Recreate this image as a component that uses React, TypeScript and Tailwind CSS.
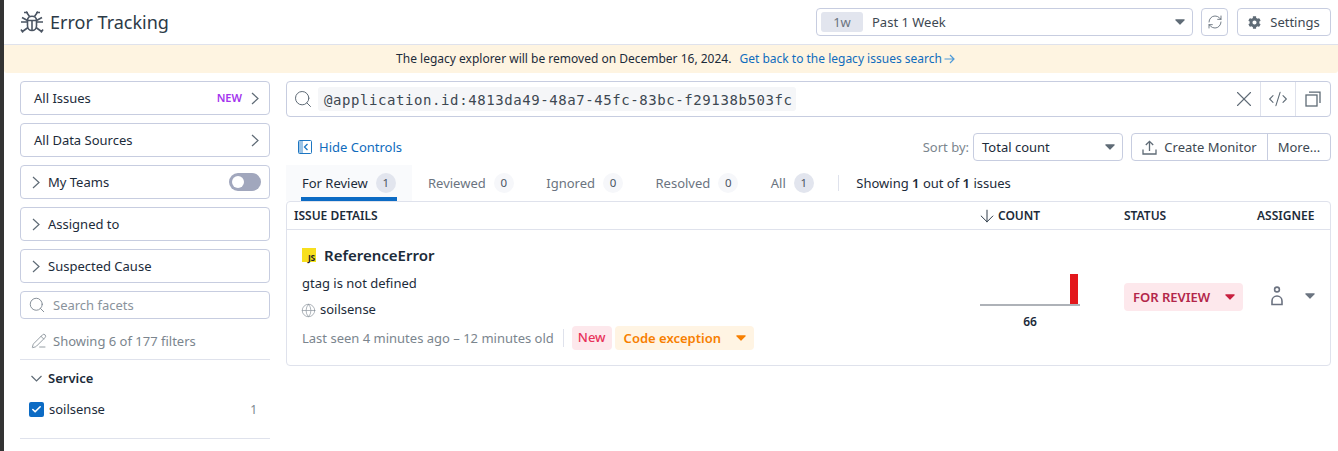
import { Search, X, CodeXml, RefreshCw, ArrowDown, Globe, PencilLine, Check } from 'lucide-react';
import { FaCog } from 'react-icons/fa';

function Caret({ className }: { className: string }) {
  return (
    <svg width="10" height="6" viewBox="0 0 10 6" className={className}>
      <path d="M0.800 0.300h8.400a.6.6 0 0 1 .45 1L5.400 5.500a.6.6 0 0 1-.8 0L.35 1.300A.6.6 0 0 1 .8.300z" fill="currentColor" />
    </svg>
  );
}

function ChevronR({ className }: { className: string }) {
  return (
    <svg width="8" height="13" viewBox="0 0 8 13" fill="none" stroke="#5f6b76" strokeWidth="1.200" className={className}>
      <path d="M1 1l6 5.500-6 5.500" />
    </svg>
  );
}

function BugIcon() {
  return (
    <svg width="24" height="24" viewBox="0 0 24 24" fill="none" stroke="#4b5563" strokeWidth="1.600" className="shrink-0">
      <path d="M7.500 10.500c0-2.500 2-4.200 4.500-4.200s4.500 1.700 4.500 4.200v5.300c0 2.600-2 4.700-4.500 4.700s-4.500-2.100-4.500-4.700z" />
      <path d="M8 10.500h8M12 10.500v10" />
      <path d="M6 1.500l3.500 5M18 1.500l-3.500 5M4 2.500l4 0M20 2.500l-4 0M1 12h6.500M23 12h-6.500M2 7.500l5.500 3M22 7.500l-5.500 3M2.500 21.500l5.500-4M21.500 21.500l-5.500-4M1 19.500l2 3M23 19.500l-2 3" />
    </svg>
  );
}

function PersonIcon() {
  return (
    <svg width="14" height="20" viewBox="0 0 14 20" fill="none" stroke="#6b7280" strokeWidth="1.600">
      <circle cx="7" cy="3.500" r="2.400" />
      <path d="M2 18.500v-3.500c0-2.800 2.200-5 5-5s5 2.200 5 5v3.500z" />
    </svg>
  );
}

function HideIcon() {
  return (
    <svg width="14" height="14" viewBox="0 0 14 14" fill="none" className="shrink-0">
      <rect x="0.500" y="0.500" width="13" height="13" rx="1" stroke="#1d76c2" />
      <rect x="1" y="1" width="4" height="12" fill="#9cc4e6" />
      <path d="M9.500 4l-3 3 3 3" stroke="#1d76c2" strokeWidth="1.300" />
    </svg>
  );
}

function CopyIcon() {
  return (
    <svg width="16" height="16" viewBox="0 0 16 16" fill="none" stroke="#5f6b76" strokeWidth="1.300">
      <rect x="1" y="4" width="11" height="11" />
      <path d="M4 1.200h11v10.800" />
    </svg>
  );
}

function TrayUpIcon() {
  return (
    <svg width="15" height="15" viewBox="0 0 15 15" fill="none" stroke="#5f6b76" strokeWidth="1.300">
      <path d="M7.500 11V1.500M3.800 5l3.700-3.700L11.200 5" />
      <path d="M1 9.500v4.500h13V9.500" />
    </svg>
  );
}

function FacetCard({ label }: { label: string }) {
  return (
    <div className="flex h-[34px] items-center rounded-[4px] border border-[#c7cde0] pl-[11px]">
      <ChevronR className="mr-[8px]" />
      <span className="pt-[2px]">{label}</span>
    </div>
  );
}

function Tab({ label, count, active, strong }: { label: string; count: string; active?: boolean; strong?: boolean }) {
  return (
    <div className={active ? 'relative flex h-[36px] w-[126px] items-center gap-[8px] bg-[#f9fafc] pl-[16px] text-[#1c2b3a]' : 'flex h-[36px] items-center gap-[8px] pl-[16px] pr-[16.500px] text-[#6b7480]'}>
      <span className="pt-[2px]">{label}</span>
      <span className={active || strong ? 'flex h-[20px] w-[20px] items-center justify-center rounded-full bg-[#e2e5ee] text-[11.500px] text-[#4b5563]' : 'flex h-[20px] w-[20px] items-center justify-center rounded-full bg-[#f6f7fa] text-[11.500px] text-[#4b5563]'}>
        {count}
      </span>
      {active && <span className="absolute bottom-0 left-[15px] right-[15px] h-[4px] bg-[#0c6bc4]" />}
    </div>
  );
}

export default function App() {
  return (
    <div className="flex h-[451px] w-[1338px] overflow-hidden bg-white font-['Noto_Sans',sans-serif] text-[13px] text-[#1c2b3a]">
      <div className="w-[4px] shrink-0 bg-[#333333]" />
      <div className="flex min-w-0 flex-1 flex-col">
        {/* Header */}
        <header className="flex h-[45px] items-center border-b border-[#dfe2ec] pl-[16px] pr-[7px]">
          <BugIcon />
          <h1 className="ml-[6px] text-[18px] text-[#2c3a47]">Error Tracking</h1>
          <div className="ml-auto flex items-center">
            <div className="flex h-[28px] w-[377px] items-center rounded-[4px] border border-[#c7cde0] pl-[4px] pr-[7px] text-[#3d4852]">
              <span className="flex h-[20px] w-[42px] items-center justify-center rounded-[3px] bg-[#e2e5ee] pt-[1px] text-[#6b7480]">1w</span>
              <span className="ml-[9px] pt-[2px]">Past 1 Week</span>
              <Caret className="ml-auto text-[#5f6b76]" />
            </div>
            <div className="ml-[8px] flex h-[28px] w-[27px] items-center justify-center rounded-[4px] border border-[#c7cde0]">
              <RefreshCw size={16} strokeWidth={1.300} className="text-[#5f6b76]" />
            </div>
            <div className="ml-[9px] flex h-[28px] w-[94px] items-center justify-center gap-[9px] rounded-[4px] border border-[#c7cde0] text-[#3d4852]">
              <FaCog size={13} className="text-[#5f6b76]" />
              <span className="pt-[2px]">Settings</span>
            </div>
          </div>
        </header>

        {/* Banner */}
        <div className="flex h-[28px] items-center justify-center rounded-b-[3px] bg-[#fef4e1] pl-[9px] text-[12px] text-[#1c2b3a]">
          The legacy explorer will be removed on December 16, 2024.
          <span className="ml-[8px] flex items-center text-[#0f6cbd]">
            Get back to the legacy issues search
            <svg width="11" height="10" viewBox="0 0 11 10" fill="none" stroke="#4f9ad8" strokeWidth="1.200" className="ml-[2px]">
              <path d="M0.500 5h9.500M6 1l4 4-4 4" />
            </svg>
          </span>
        </div>

        <div className="flex flex-1 gap-[16px] pl-[16px] pr-[7px] pt-[8px]">
          {/* Sidebar */}
          <aside className="flex w-[250px] shrink-0 flex-col">
            <div className="flex h-[34px] items-center rounded-[4px] border border-[#c7cde0] pl-[13px] pr-[10px]">
              <span className="pt-[2px]">All Issues</span>
              <span className="ml-auto mr-[9px] pt-[1px] text-[11px] font-semibold text-[#a335ee]">NEW</span>
              <ChevronR className="" />
            </div>
            <div className="mt-[8px] flex h-[34px] items-center justify-between rounded-[4px] border border-[#c7cde0] pl-[13px] pr-[10px]">
              <span className="pt-[2px]">All Data Sources</span>
              <ChevronR className="" />
            </div>
            <div className="mt-[8px] flex h-[34px] items-center rounded-[4px] border border-[#c7cde0] pl-[11px] pr-[8px]">
              <ChevronR className="mr-[8px]" />
              <span className="pt-[2px]">My Teams</span>
              <span className="ml-auto flex h-[18px] w-[32px] items-center rounded-full bg-[#a1a7bd] pl-[3px]">
                <span className="h-[12px] w-[12px] rounded-full bg-white" />
              </span>
            </div>
            <div className="mt-[8px]"><FacetCard label="Assigned to" /></div>
            <div className="mt-[8px]"><FacetCard label="Suspected Cause" /></div>
            <div className="mt-[8px] flex h-[28px] items-center rounded-[4px] border border-[#c7cde0] pl-[7px] text-[#8a939c]">
              <Search size={18} strokeWidth={1.200} className="mr-[7px] text-[#7b858e]" />
              <span className="pt-[2px]">Search facets</span>
            </div>
            <div className="flex h-[41px] items-center border-b border-[#dfe2ec] pl-[11px] pt-[4px] text-[#7b858e]">
              <PencilLine size={16} strokeWidth={1.200} className="mr-[6px]" />
              <span className="pt-[1px]">Showing 6 of 177 filters</span>
            </div>
            <div className="flex h-[37px] items-center pl-[11px] font-semibold">
              <svg width="11" height="7" viewBox="0 0 11 7" fill="none" stroke="#5f6b76" strokeWidth="1.200" className="mr-[6px]">
                <path d="M0.500 1l5 5 5-5" />
              </svg>
              Service
            </div>
            <div className="flex h-[24px] items-center pl-[9px] pr-[13px]">
              <span className="mr-[5px] flex h-[15px] w-[15px] items-center justify-center rounded-[2px] bg-[#0c6bc4]">
                <Check size={11} strokeWidth={3.500} className="text-white" />
              </span>
              <span className="pt-[2px]">soilsense</span>
              <span className="ml-auto pt-[2px] text-[12px] text-[#7b858e]">1</span>
            </div>
            <div className="mt-[17px] border-b border-[#dfe2ec]" />
          </aside>

          {/* Main */}
          <main className="flex min-w-0 flex-1 flex-col">
            <div className="flex h-[36px] items-center rounded-[4px] border border-[#c7cde0]">
              <Search size={20} strokeWidth={1.200} className="ml-[6px] mr-[5px] text-[#5f6b76]" />
              <span className="flex h-[24px] items-center rounded-[3px] bg-[#f5f6f8] pl-[6px] pr-[4px] pt-[2px] font-['DejaVu_Sans_Mono',monospace] text-[14px] tracking-[0.58px] text-[#3d4852]">@application.id:4813da49-48a7-45fc-83bc-f29138b503fc</span>
              <button className="ml-auto mr-[3px]"><X size={26} strokeWidth={1} className="text-[#5f6b76]" /></button>
              <div className="flex h-full w-[35px] items-center justify-center border-l border-[#dfe2ec]">
                <CodeXml size={20} strokeWidth={1.300} className="text-[#5f6b76]" />
              </div>
              <div className="flex h-full w-[35px] items-center justify-center border-l border-[#dfe2ec]">
                <CopyIcon />
              </div>
            </div>

            <div className="mt-[16px] flex h-[28px] items-center">
              <div className="ml-[12px] flex items-center gap-[7px] text-[#0f6cbd]">
                <HideIcon />
                <span className="pt-[2px]">Hide Controls</span>
              </div>
              <span className="ml-auto mr-[4px] pt-[2px] text-[#7b858e]">Sort by:</span>
              <div className="flex h-[28px] w-[150px] items-center justify-between rounded-[4px] border border-[#c7cde0] pl-[8px] pr-[7px]">
                <span className="pt-[2px]">Total count</span>
                <Caret className="text-[#5f6b76]" />
              </div>
              <div className="ml-[8px] flex h-[28px] w-[200px] items-center rounded-[4px] border border-[#c7cde0] text-[#3d4852]">
                <div className="flex h-full w-[136px] items-center justify-center gap-[7px] border-r border-[#c7cde0]">
                  <TrayUpIcon />
                  <span className="pt-[2px]">Create Monitor</span>
                </div>
                <div className="flex flex-1 items-center justify-center pt-[2px]">More...</div>
              </div>
            </div>

            {/* Tabs */}
            <div className="mt-[4px] flex h-[36px] items-center">
              <Tab label="For Review" count="1" active />
              <Tab label="Reviewed" count="0" />
              <Tab label="Ignored" count="0" />
              <Tab label="Resolved" count="0" />
              <Tab label="All" count="1" strong />
              <div className="ml-[8px] mr-[17px] h-[16px] border-l border-[#dfe2ec]" />
              <span className="pt-[2px]">Showing <b className="font-semibold">1</b> out of <b className="font-semibold">1</b> issues</span>
            </div>

            {/* Table */}
            <div className="h-[165px] rounded-[4px] border border-[#dfe2ec]">
              <div className="flex h-[28px] items-center border-b border-[#dfe2ec] pl-[7px] text-[12px] font-semibold">
                <span className="w-[686px]">ISSUE DETAILS</span>
                <span className="flex w-[144px] items-center gap-[1px]">
                  <ArrowDown size={20} strokeWidth={1.100} className="-ml-[3px]" />
                  COUNT
                </span>
                <span className="w-[133px]">STATUS</span>
                <span>ASSIGNEE</span>
              </div>
              <div className="flex pl-[15px]">
                <div className="w-[678px] pt-[14px]">
                  <div className="flex h-[22px] items-center text-[15px] font-semibold">
                    <span className="mr-[8px] flex h-[14px] w-[14px] items-end justify-end bg-[#f7df1e] pr-[1px] text-[8.500px] font-bold leading-[9px] tracking-[-0.3px] text-[#222222]">JS</span>
                    ReferenceError
                  </div>
                  <div className="mt-[7px] h-[20px] leading-[20px]">gtag is not defined</div>
                  <div className="mt-[7px] flex h-[20px] items-center">
                    <Globe size={15} strokeWidth={1.100} className="-ml-[1px] mr-[4px] text-[#8a939c]" />
                    soilsense
                  </div>
                  <div className="mt-[6px] flex h-[24px] items-center">
                    <span className="pt-[2px] text-[#7b858e]">Last seen 4 minutes ago – 12 minutes old</span>
                    <span className="ml-[9px] mr-[8px] h-[18px] border-l border-[#dfe2ec]" />
                    <span className="flex h-[24px] items-center rounded-[4px] bg-[#fde8ec] px-[6px] font-medium text-[#e8325a]">New</span>
                    <span className="ml-[3px] flex h-[24px] w-[139px] items-center justify-between rounded-[4px] bg-[#fff4e3] pl-[9px] pr-[8px] font-semibold text-[#f77f00]">
                      <span className="pt-[2px]">Code exception</span>
                      <Caret className="text-[#f77f00]" />
                    </span>
                  </div>
                </div>
                <div className="w-[144px] pt-[44px]">
                  <div className="relative h-[32px] w-[100px] border-b-2 border-[#aeb2b8]">
                    <span className="absolute bottom-0 right-[2px] h-[30px] w-[8px] bg-[#e3171b]" />
                  </div>
                  <div className="mt-[7px] w-[100px] text-center text-[12px] font-semibold">66</div>
                </div>
                <div className="w-[143px] pt-[53px]">
                  <span className="flex h-[28px] w-[119px] items-center justify-between rounded-[4px] bg-[#fde8ec] pl-[9px] pr-[8px] text-[13px] font-semibold text-[#b3264a]">
                    <span className="pt-[2px]">FOR REVIEW</span>
                    <Caret className="text-[#c8203f]" />
                  </span>
                </div>
                <div className="flex items-center gap-[21px] self-start pl-[3px] pt-[56px]">
                  <PersonIcon />
                  <Caret className="text-[#6b7480]" />
                </div>
              </div>
            </div>
          </main>
        </div>
      </div>
    </div>
  );
}
